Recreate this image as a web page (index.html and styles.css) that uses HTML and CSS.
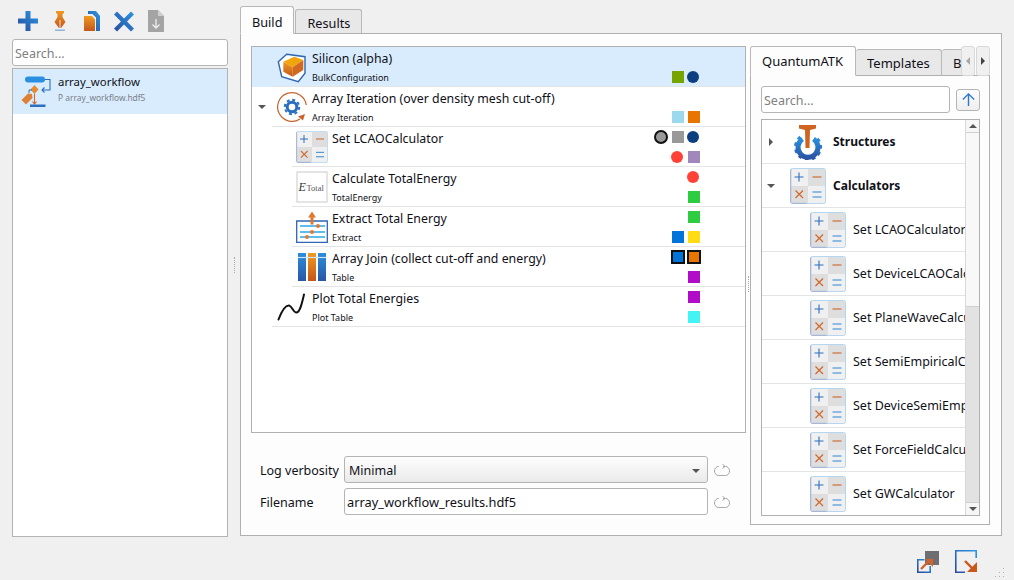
FILE: index.html
```html
<!DOCTYPE html>
<html lang="en">
<head>
<meta charset="utf-8">
<title>array_workflow</title>
<link rel="stylesheet" href="styles.css">
</head>
<body>
<svg class="defs" aria-hidden="true">
  <defs>
    <linearGradient id="blue" x1="0" y1="1" x2="1" y2="0"><stop offset="0" stop-color="#2b4a9c"/><stop offset="1" stop-color="#2a98e4"/></linearGradient>
    <linearGradient id="orange" x1="0" y1="0" x2="0" y2="1"><stop offset="0" stop-color="#f09a20"/><stop offset="1" stop-color="#c4561c"/></linearGradient>
    <linearGradient id="col" x1="0" y1="0" x2="0" y2="1"><stop offset="0" stop-color="#2a8fdc"/><stop offset="1" stop-color="#2a55a5"/></linearGradient>
    <symbol id="calc" viewBox="0 0 36 36">
      <rect x="0.5" y="0.5" width="35" height="35" rx="2" fill="#f0f0f0" stroke="#b4d6ee"/>
      <rect x="18" y="1" width="17" height="17" fill="#dedede"/>
      <rect x="1" y="18" width="17" height="17" fill="#dedede"/>
      <path d="M.7 1.500v33M1.500 35.300h15" stroke="#a8b6d8" stroke-width="1.200"/>
      <path d="M9 4.500v9M4.500 9h9" stroke="#2a6fc0" stroke-width="1.100"/>
      <path d="M22.500 9h9" stroke="#c8642c" stroke-width="1.100"/>
      <path d="M5.500 22.500l7.500 7.500M13 22.500l-7.500 7.500" stroke="#d0682c" stroke-width="1.200"/>
      <path d="M22.500 24h9M22.500 29h9" stroke="#2a86d8" stroke-width="1.100"/>
    </symbol>
    <symbol id="reset" viewBox="0 0 16 14">
      <path d="M5 3.500H4.500a4 4.500 0 0 0 0 9h7a4 4.500 0 0 0 0-9H9M8.500 1l2.500 2.500-2.500 2" fill="none" stroke="#a8a8a8"/>
    </symbol>
  </defs>
</svg>
<div class="app">
  <div class="main">
    <aside class="side">
      <div class="toolbar">
        <svg class="tool" viewBox="0 0 24 24"><path d="M9.500 2h5v7.500H22v5h-7.500V22h-5v-7.500H2v-5h7.500z" fill="url(#blue)"/></svg>
        <svg class="tool" viewBox="0 0 24 24"><path d="M8 2h8v2l-1.500 1v3L17.500 13 13 19h-2L6.500 13 9.500 8V5L8 4z" fill="url(#orange)"/><path d="M12 11v8" stroke="#fff" stroke-width="0.800"/><path d="M7 20.500h10V22H7z" fill="#8db6dc"/></svg>
        <svg class="tool" viewBox="0 0 24 24"><path d="M8 2h8l4 5v15h-4V8.500L12.500 5H8z" fill="url(#blue)"/><path d="M4 7h8l3 3.500V22H4z" fill="url(#orange)"/></svg>
        <svg class="tool" viewBox="0 0 24 24"><path d="M5 2.500L12 9.500l7-7 3 3-7 7 7 7-3 3-7-7-7 7-3-3 7-7-7-7z" fill="url(#blue)"/></svg>
        <svg class="tool" viewBox="0 0 24 24"><path d="M4 1h10l6 6v16H4z" fill="#a4a4a4"/><path d="M14 1v6h6z" fill="#cfcfcf"/><path d="M12 10v9M8.500 15.500l3.500 3.500 3.500-3.500" fill="none" stroke="#eee" stroke-width="1.300"/></svg>
      </div>
      <div class="search search-side">Search...</div>
      <div class="list">
        <div class="list-item">
          <svg class="wf-icon" viewBox="0 0 30 32">
            <rect x="4" y="0.500" width="20" height="6" rx="3" fill="#2a8fe0"/>
            <path d="M24 3.500h5v10.500h-8M23.500 11.500L21 14l2.500 2.500" fill="none" stroke="#2a6fc0" stroke-width="1.100"/>
            <path d="M13.500 9l4 4.500-4 4.500-4-4.500z" fill="#e88a30"/>
            <path d="M13.500 18v10M11.500 25.500l2 2.500 2-2.500" fill="none" stroke="#d0682c" stroke-width="1.100"/>
            <path d="M9 28.500h15.500V31H9z" fill="#2a6fc0"/>
            <path d="M.5 24l6.500-6.500 4 .5.500 4-6.500 6.500z" fill="#e08034"/>
            <path d="M11 14H8v3" fill="none" stroke="#2a6fc0"/>
          </svg>
          <div>
            <div class="item-name">array_workflow</div>
            <div class="item-file">P array_workflow.hdf5</div>
          </div>
        </div>
      </div>
    </aside>
    <div class="split split-main"><span class="grip"></span></div>
    <section class="work">
      <div class="tabs">
        <div class="tab active">Build</div>
        <div class="tab">Results</div>
      </div>
      <div class="panel">
        <div class="left-col">
          <div class="tree">
            <div class="row selected">
              <div class="toggle"></div>
              <div class="cell">
                <div class="icon-col"><svg class="ico-top" viewBox="0 0 30 32"><path d="M9.700 3.300L28 5.700v16.600l-6.700 8.400-16.600-5L1.300 10.700z" fill="#fff" stroke="#2f65b5" stroke-width="1.400"/><path d="M6.300 10.700l11-5L26.300 9l-10.600 7.300z" fill="#f2a40c"/><path d="M6.300 10.700l9.400 5.600v9.400l-9.400-5z" fill="url(#orange)"/><path d="M15.700 16.300L26.300 9v10l-10.600 6.700z" fill="#cf6a20"/></svg></div>
                <div class="text"><div class="title">Silicon (alpha)</div><div class="sub">BulkConfiguration</div></div>
                <div class="ports"><div class="port-line"></div><div class="port-line"><i class="sq green-o"></i><i class="dot navy"></i></div></div>
              </div>
            </div>
            <div class="row">
              <div class="toggle"><span class="arrow-down"></span></div>
              <div class="cell">
                <div class="icon-col"><svg class="ico-top" viewBox="0 0 30 32"><path d="M29.300 14A14.400 14.400 0 1 0 23 28" fill="none" stroke="#c8642c" stroke-width="1.200"/><path d="M21 25.500l7-2.500-2 6.500z" fill="#c8642c"/><circle cx="15" cy="16" r="4.800" fill="none" stroke="#2a6fc0" stroke-width="3"/><circle cx="15" cy="16" r="7.200" fill="none" stroke="#2a6fc0" stroke-width="2" stroke-dasharray="3 2.650"/></svg></div>
                <div class="text"><div class="title">Array Iteration (over density mesh cut-off)</div><div class="sub">Array Iteration</div></div>
                <div class="ports"><div class="port-line"></div><div class="port-line"><i class="sq sky"></i><i class="sq orange"></i></div></div>
              </div>
            </div>
            <div class="row child">
              <div class="cell">
                <div class="icon-col"><svg class="ico-child"><use href="#calc"/></svg></div>
                <div class="text"><div class="title">Set LCAOCalculator</div><div class="sub"></div></div>
                <div class="ports"><div class="port-line"><i class="ring"></i><i class="sq grey"></i><i class="dot navy"></i></div><div class="port-line"><i class="dot red"></i><i class="sq violet"></i></div></div>
              </div>
            </div>
            <div class="row child">
              <div class="cell">
                <div class="icon-col"><svg class="ico-child" viewBox="0 0 32 32"><rect x="1" y="1" width="30" height="30" fill="#fff" stroke="#dcdcdc" stroke-width="1.500"/><text x="2.500" y="20" class="etot-e">E</text><text x="10.500" y="20" class="etot-t">Total</text></svg></div>
                <div class="text"><div class="title">Calculate TotalEnergy</div><div class="sub">TotalEnergy</div></div>
                <div class="ports"><div class="port-line"><i class="dot red"></i></div><div class="port-line"><i class="sq lime"></i></div></div>
              </div>
            </div>
            <div class="row child">
              <div class="cell">
                <div class="icon-col"><svg class="ico-child" viewBox="0 0 32 32"><path d="M.7 10h30.600v21.300H.7z" fill="#fff" stroke="#2f65b5" stroke-width="1.300"/><path d="M16 .5l4 6h-2.500v7h-3v-7H12z" fill="#e07a30"/><path d="M4 15h25M4 21h25M4 26h25" stroke="#2aa8e8" stroke-width="1.300"/><circle cx="22" cy="15" r="2" fill="#e07a30"/><circle cx="16" cy="21" r="2" fill="#e07a30"/><circle cx="11" cy="26" r="2" fill="#e07a30"/></svg></div>
                <div class="text"><div class="title">Extract Total Energy</div><div class="sub">Extract</div></div>
                <div class="ports"><div class="port-line"><i class="sq lime"></i></div><div class="port-line"><i class="sq blue"></i><i class="sq yellow"></i></div></div>
              </div>
            </div>
            <div class="row child">
              <div class="cell">
                <div class="icon-col"><svg class="ico-child" viewBox="0 0 32 32"><rect x="2" y="2" width="8" height="28" fill="url(#col)"/><rect x="12" y="2" width="8" height="28" fill="url(#orange)"/><rect x="22" y="2" width="8" height="28" fill="url(#col)"/><path d="M2 6.500h28" stroke="#cfe4f6" stroke-width="1.200"/></svg></div>
                <div class="text"><div class="title">Array Join (collect cut-off and energy)</div><div class="sub">Table</div></div>
                <div class="ports"><div class="port-line"><i class="box blue"></i><i class="box orange"></i></div><div class="port-line"><i class="sq purple"></i></div></div>
              </div>
            </div>
            <div class="row">
              <div class="toggle"></div>
              <div class="cell">
                <div class="icon-col"><svg class="ico-top" viewBox="0 0 30 32"><path d="M1.500 28.500C4 22 8 14 12 14.500c3 .5 4 6.500 7 7 4 .5 6-9.500 8-18" fill="none" stroke="#111" stroke-width="2" stroke-linecap="round"/></svg></div>
                <div class="text"><div class="title">Plot Total Energies</div><div class="sub">Plot Table</div></div>
                <div class="ports"><div class="port-line"><i class="sq purple"></i></div><div class="port-line"><i class="sq cyan"></i></div></div>
              </div>
            </div>
          </div>
          <div class="form">
            <div class="form-row">
              <label class="form-label">Log verbosity</label>
              <div class="combo"><span>Minimal</span><span class="arrow-down"></span></div>
              <svg class="reset"><use href="#reset"/></svg>
            </div>
            <div class="form-row">
              <label class="form-label">Filename</label>
              <div class="field">array_workflow_results.hdf5</div>
              <svg class="reset"><use href="#reset"/></svg>
            </div>
          </div>
        </div>
        <div class="split split-inner"><span class="grip"></span></div>
        <div class="right-col">
          <div class="rtabs-bar">
            <div class="rtabs">
              <div class="tab rtab active">QuantumATK</div>
              <div class="tab rtab">Templates</div>
              <div class="tab rtab">B</div>
            </div>
            <div class="scroll-btn"><span class="arrow-left"></span></div>
            <div class="scroll-btn"><span class="arrow-right"></span></div>
          </div>
          <div class="rpane">
            <div class="rsearch">
              <div class="search search-r">Search...</div>
              <div class="up-btn"><svg viewBox="0 0 16 16"><path d="M8 15V2M2 8l6-6 6 6" fill="none" stroke="#2a78cc" stroke-width="1.500"/></svg></div>
            </div>
            <div class="rtree">
              <div class="rtree-items">
                <div class="ritem">
                  <div class="rtoggle"><span class="arrow-right dark"></span></div>
                  <svg class="ricon" viewBox="0 0 36 36"><path d="M12.500 15A10 10 0 1 0 23.500 15" fill="none" stroke="url(#col)" stroke-width="5"/><path d="M10.500 13A12.500 12.500 0 1 0 25.500 13" fill="none" stroke="url(#col)" stroke-width="3" stroke-dasharray="3.500 3.500"/><path d="M9 1h17v3.500l-6 1.500-.5 18h-4L15 6l-6-1.500z" fill="#cf6420"/></svg>
                  <div class="rname bold">Structures</div>
                </div>
                <div class="ritem">
                  <div class="rtoggle"><span class="arrow-down"></span></div>
                  <svg class="ricon"><use href="#calc"/></svg>
                  <div class="rname bold">Calculators</div>
                </div>
                <div class="ritem sub-item"><svg class="ricon"><use href="#calc"/></svg><div class="rname">Set LCAOCalculator</div></div>
                <div class="ritem sub-item"><svg class="ricon"><use href="#calc"/></svg><div class="rname">Set DeviceLCAOCalculator</div></div>
                <div class="ritem sub-item"><svg class="ricon"><use href="#calc"/></svg><div class="rname">Set PlaneWaveCalculator</div></div>
                <div class="ritem sub-item"><svg class="ricon"><use href="#calc"/></svg><div class="rname">Set SemiEmpiricalCalculator</div></div>
                <div class="ritem sub-item"><svg class="ricon"><use href="#calc"/></svg><div class="rname">Set DeviceSemiEmpiricalCalculator</div></div>
                <div class="ritem sub-item"><svg class="ricon"><use href="#calc"/></svg><div class="rname">Set ForceFieldCalculator</div></div>
                <div class="ritem sub-item last"><svg class="ricon"><use href="#calc"/></svg><div class="rname">Set GWCalculator</div></div>
              </div>
              <div class="sbar">
                <div class="sbtn"><span class="arrow-up"></span></div>
                <div class="strack"></div>
                <div class="sthumb"></div>
                <div class="sbtn sbtn-end"><span class="arrow-down"></span></div>
              </div>
            </div>
          </div>
        </div>
      </div>
    </section>
  </div>
  <footer class="footer">
    <svg class="foot-icon" viewBox="0 0 22 24"><rect x="8" y="1" width="14" height="14" fill="#6e6e70"/><path d="M7.500 9.800H.8v12.400h12.400V16" fill="none" stroke="url(#blue)" stroke-width="1.600"/><path d="M4 19l8-8" stroke="#d0642c" stroke-width="2.400"/><path d="M8 9h8v8z" fill="#d0642c"/></svg>
    <svg class="foot-icon" viewBox="0 0 22 24"><path d="M10 22.200H.8V.8h20.400V8" fill="none" stroke="url(#blue)" stroke-width="1.600"/><path d="M10 11l8 8" stroke="#c8581c" stroke-width="2.400"/><path d="M22 12v10H12z" fill="#c8581c"/></svg>
    <svg class="size-grip" viewBox="0 0 10 10"><path d="M8 0h1v1H8zM4 4h1v1H4zM8 4h1v1H8zM0 8h1v1H0zM4 8h1v1H4zM8 8h1v1H8z" fill="#b0b0b0"/></svg>
  </footer>
</div>
</body>
</html>
```

FILE: styles.css
```css
* { box-sizing: border-box; }
html, body { margin: 0; height: 100%; }
body {
  background: #f0f0f0;
  color: #101018;
  font-family: "Noto Sans", "Open Sans", sans-serif;
  font-size: 12.5px;
  overflow: hidden;
}
.defs { display: block; width: 0; height: 0; }
.app { width: 1014px; height: 580px; display: flex; flex-direction: column; }
.main { display: flex; height: 537px; padding: 0 12px; }

/* Left list */
.side { width: 216px; display: flex; flex-direction: column; }
.toolbar { height: 39px; display: flex; align-items: flex-start; padding: 9px 0 0 4px; gap: 8px; }
.tool { width: 24px; height: 24px; }
.search {
  background: #fff;
  border: 1px solid #b4b4b4;
  border-radius: 3px;
  color: #808080;
  padding: 2px 0 0 2px;
  display: flex;
  align-items: center;
}
.search-side { height: 27px; }
.list { flex: 1; margin-top: 2px; background: #fff; border: 1px solid #b4b4b4; }
.list-item { height: 45px; background: #d8ecfd; display: flex; align-items: flex-start; padding: 5px 0 0 8px; gap: 7px; }
.wf-icon { width: 30px; height: 32px; margin-top: 2px; }
.item-name { line-height: 15px; font-size: 11.4px; }
.item-file { font-size: 8.4px; color: #7b7f88; line-height: 14px; margin-top: 2px; }

/* Splitters */
.split { display: flex; align-items: center; justify-content: center; }
.split-main { width: 12px; padding-bottom: 8px; }
.split-inner { width: 4px; padding-bottom: 4px; }
.grip { display: block; width: 1px; height: 16px; border-left: 1px dotted #aaa; }

/* Work area */
.work { flex: 1; display: flex; flex-direction: column; padding: 6px 0 1px; min-width: 0; }
.tabs { display: flex; height: 28px; align-items: flex-end; gap: 1px; position: relative; z-index: 1; }
.tab {
  background: #e8e8e8;
  border: 1px solid #b8b8b8;
  border-bottom-color: #b0b0b0;
  border-radius: 3px 3px 0 0;
  height: 25px;
  padding: 2px 11px 0;
  display: flex;
  align-items: center;
  font-size: 12.7px;
}
.tab.active { background: #fdfdfd; height: 28px; border-bottom-color: #fdfdfd; padding-top: 3px; }
.panel {
  flex: 1;
  margin-top: -1px;
  display: flex;
  background: #fdfdfd;
  border: 1px solid #b0b0b0;
  padding: 12px 11px 10px 10px;
  min-height: 0;
}
.left-col { width: 495px; display: flex; flex-direction: column; }

/* Workflow tree */
.tree { height: 387px; background: #fff; border: 1px solid #b0b0b0; }
.row { display: flex; height: 40px; }
.row.selected { background: #d8ecfd; }
.toggle { width: 20px; display: flex; align-items: center; justify-content: center; }
.row.child { padding-left: 40px; }
.cell { flex: 1; display: flex; border-bottom: 1px solid #e4e4e4; min-width: 0; }
.icon-col { width: 40px; display: flex; padding: 4px 0 0 5px; }
.ico-top { width: 30px; height: 32px; }
.ico-child { width: 32px; height: 32px; margin-left: -1px; }
.text { flex: 1; min-width: 0; white-space: nowrap; }
.title { line-height: 16px; margin-top: 4px; font-size: 12.35px; }
.sub { font-size: 9px; line-height: 12px; margin-top: 5px; }
.ports { padding: 4px 45px 0 0; display: flex; flex-direction: column; gap: 8px; }
.port-line { height: 12px; display: flex; justify-content: flex-end; gap: 4px; width: 46px; margin-left: auto; }
.sq, .dot { display: block; width: 12px; height: 12px; flex: none; }
.dot { border-radius: 50%; margin: 0 1px 0 -1px; }
.port-line .dot + .sq { margin-left: 0; }
.ring { display: block; flex: none; width: 14px; height: 14px; margin: -1px 0 -1px -1px; border-radius: 50%; background: #999; border: 2px solid #111; }
.box { display: block; flex: none; width: 14px; height: 14px; margin: -1px; border: 2px solid #111; }
.green-o { background: #76a400; }
.navy { background: #0c3f80; }
.sky { background: #9cd9ec; }
.orange { background: #e87500; }
.grey { background: #999; }
.red { background: #ff4136; }
.violet { background: #a088bc; }
.lime { background: #2ecc40; }
.blue { background: #0074d9; }
.yellow { background: #ffdc14; }
.purple { background: #b10dc9; }
.cyan { background: #44f4f4; }
.etot-e { font: italic 12px "Liberation Serif", serif; fill: #333; }
.etot-t { font: 8.5px "Liberation Serif", serif; fill: #555; }

/* Form */
.form { margin-top: 23px; padding-left: 9px; display: flex; flex-direction: column; gap: 5px; }
.form-row { display: flex; align-items: center; height: 27px; }
.form-label { width: 84px; flex: none; padding-top: 2px; }
.combo {
  width: 364px;
  height: 27px;
  border: 1px solid #b4b4b4;
  border-radius: 3px;
  background: linear-gradient(#fdfdfd, #eaeaea);
  display: flex;
  align-items: center;
  justify-content: space-between;
  padding: 2px 7px 0 4px;
}
.field { width: 364px; height: 27px; border: 1px solid #b4b4b4; border-radius: 3px; background: #fff; padding: 1px 0 0 2px; display: flex; align-items: center; font-size: 12.8px; }
.reset { width: 16px; height: 14px; margin-left: 6px; }

/* Arrows */
.arrow-down, .arrow-up, .arrow-left, .arrow-right { display: block; width: 0; height: 0; border-style: solid; }
.arrow-down { border-width: 4px 4px 0; border-color: #555 transparent transparent; }
.arrow-up { border-width: 0 4px 4px; border-color: transparent transparent #555; }
.arrow-left { border-width: 4px 4px 4px 0; border-color: transparent #a8a8a8 transparent transparent; }
.arrow-right { border-width: 4px 0 4px 4px; border-color: transparent transparent transparent #444; }
.arrow-right.dark { border-left-color: #555; }

/* Right column */
.right-col { width: 240px; display: flex; flex-direction: column; }
.rtabs-bar { display: flex; height: 30px; position: relative; z-index: 1; }
.rtabs { width: 211px; overflow: hidden; display: flex; align-items: flex-end; height: 30px; }
.rtab { flex: none; height: 27px; padding: 0 10px; border-left: 0; font-size: 13px; }
.rtab.active { height: 30px; border-left: 1px solid #b8b8b8; width: 106px; padding: 0 11px; }
.rtab:nth-child(2) { width: 86px; padding-left: 11px; }
.rtab:nth-child(3) { width: 40px; padding-left: 11px; }
.scroll-btn { width: 14px; height: 30px; margin-right: 1px; background: #f0f0f0; border: 1px solid #d8d8d8; border-radius: 3px; display: flex; align-items: center; justify-content: center; }
.scroll-btn:last-child { margin-right: 0; }
.rpane { flex: 1; margin-top: -1px; border: 1px solid #b0b0b0; background: #fdfdfd; padding: 10px 9px 8px 10px; display: flex; flex-direction: column; min-height: 0; }
.rsearch { display: flex; align-items: center; gap: 6px; height: 27px; }
.search-r { width: 189px; height: 27px; }
.up-btn { width: 24px; height: 22px; border: 1px solid #b4b4b4; border-radius: 3px; background: linear-gradient(#fdfdfd, #eeeeee); display: flex; align-items: center; justify-content: center; }
.up-btn svg { width: 15px; height: 15px; }
.rtree { flex: 1; margin-top: 6px; background: #fff; border: 1px solid #b0b0b0; display: flex; min-height: 0; overflow: hidden; }
.rtree-items { flex: 1; min-width: 0; overflow: hidden; }
.ritem { height: 44px; display: flex; align-items: center; gap: 7px; border-bottom: 1px solid #e4e4e4; }
.ritem.last { border-bottom: 0; height: 43px; }
.rtoggle { width: 21px; display: flex; justify-content: center; padding-right: 3px; }
.sub-item { padding-left: 48px; }
.ricon { width: 36px; height: 36px; flex: none; }
.rname { white-space: nowrap; }
.bold { font-weight: 700; font-size: 12px; }
.sbar { width: 14px; flex: none; border-left: 1px solid #d8d8d8; display: flex; flex-direction: column; background: #f8f8f8; }
.sbtn { height: 13px; display: flex; align-items: center; justify-content: center; border-bottom: 1px solid #d0d0d0; background: #f6f6f6; flex: none; }
.sbtn-end { border-bottom: 0; border-top: 1px solid #d0d0d0; }
.strack { height: 173px; flex: none; background: #f8f8f8; }
.sthumb { flex: 1; background: #e2e2e2; border-top: 1px solid #cfcfcf; }

/* Footer */
.footer { flex: 1; display: flex; justify-content: flex-end; align-items: flex-start; padding: 13px 37px 0 0; gap: 16px; position: relative; }
.foot-icon { width: 22px; height: 24px; }
.size-grip { position: absolute; right: 9px; bottom: 2px; width: 10px; height: 10px; }
```
